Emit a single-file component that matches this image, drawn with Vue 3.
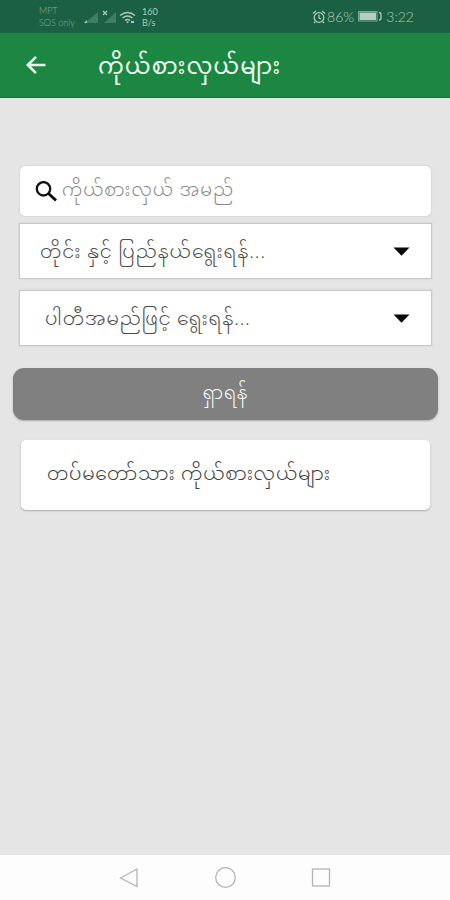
<script setup>
const title = 'ကိုယ်စားလှယ်များ'
const searchHint = 'ကိုယ်စားလှယ် အမည်'
const filters = [
  { key: 'region', label: 'တိုင်း နှင့် ပြည်နယ်ရွေးရန်...' },
  { key: 'party', label: 'ပါတီအမည်ဖြင့် ရွေးရန်...' },
]
const submitLabel = 'ရှာရန်'
const cardLabel = 'တပ်မတော်သား ကိုယ်စားလှယ်များ'
</script>

<template>
  <div class="screen">
    <div class="status">
      <div class="carrier"><span>MPT</span><span>SOS only</span></div>
      <svg class="signals" width="52" height="16" viewBox="0 0 52 16">
        <path d="M1 14L14 3V14Z" fill="#3f7d66" />
        <path d="M0 14l3-3v3z" fill="#a9cbbb" />
        <path d="M20 14L32 3V14Z" fill="#3f7d66" />
        <path d="M19 2l4 4M23 2l-4 4" stroke="#a9cbbb" stroke-width="1.2" />
        <g fill="none" stroke="#a9cbbb" stroke-width="1.5">
          <path d="M36 6.5Q43.500 .5 51 6.500M38.500 9Q43.500 5 48.500 9M41 11.500Q43.500 9.500 46 11.500" />
        </g>
        <path d="M42 12.500h3l-1.500 2zM47 12h3v2h-3z" fill="#a9cbbb" />
      </svg>
      <div class="rate"><span>160</span><span>B/s</span></div>
      <div class="right">
        <svg width="14" height="14" viewBox="0 0 14 14" fill="none" stroke="#a9cbbb" stroke-width="1.300">
          <circle cx="7" cy="7.500" r="4.800" />
          <path d="M7 4.500V8l2 1M1 3.500L4 1M13 3.500L10 1M3.500 11.500L2 13M10.500 11.500L12 13" />
        </svg>
        <span class="percent">86%</span>
        <svg class="battery" width="25" height="11" viewBox="0 0 25 11">
          <rect x=".5" y=".5" width="18.500" height="9.500" fill="none" stroke="#7caa97" />
          <rect x="1.500" y="1.500" width="16.500" height="7.500" fill="#b5d0c3" />
          <path d="M21 1.500q2 0 2 2v3.500q0 2-2 2" fill="none" stroke="#a9cbbb" stroke-width="1.300" />
        </svg>
        <span class="clock">3:22</span>
      </div>
    </div>
    <header class="bar">
      <svg class="back" width="22" height="20" viewBox="0 0 22 20" fill="none" stroke="#e6f7e8" stroke-width="2.600">
        <path d="M20.500 10H3M11 1.800L2.800 10L11 18.200" />
      </svg>
      <h1 class="title">{{ title }}</h1>
    </header>
    <main class="body">
      <div class="search">
        <svg width="23" height="21" viewBox="0 0 23 21" fill="none" stroke="#111">
          <circle cx="8.500" cy="7.800" r="6.700" stroke-width="2.300" />
          <path d="M13.500 12.500L21 19.500" stroke-width="3" />
        </svg>
        <span class="hint">{{ searchHint }}</span>
      </div>
      <div v-for="f in filters" :key="f.key" class="select" :class="f.key">
        <span class="value">{{ f.label }}</span>
        <svg width="17" height="9" viewBox="0 0 17 9"><path d="M.5 .5H16.500L8.500 8.700Z" fill="#080808" /></svg>
      </div>
      <button class="submit"><span>{{ submitLabel }}</span></button>
      <div class="card"><span>{{ cardLabel }}</span></div>
    </main>
    <nav class="nav">
      <svg width="212" height="24" viewBox="0 0 212 24" fill="none" stroke="#b4b4b4" stroke-width="1.300">
        <path d="M1.500 12L18 3V20.500Z" />
        <circle cx="106.500" cy="11.500" r="9.800" />
        <rect x="193.500" y="3" width="17" height="17" />
      </svg>
    </nav>
  </div>
</template>

<style>
body {
  margin: 0;
}
</style>

<style scoped>
.screen {
  display: flex;
  flex-direction: column;
  width: 450px;
  height: 900px;
  overflow: hidden;
  background: #e5e5e5;
  font-family: "Noto Sans Myanmar", "Padauk", "Myanmar Text", Roboto, "Noto Sans", sans-serif;
  font-weight: 300;
  white-space: nowrap;
}
.status {
  display: flex;
  align-items: center;
  box-sizing: border-box;
  height: 33px;
  padding: 0 36px 0 39px;
  background: #1b6043;
  color: #a9cbbb;
  font-family: Lato, sans-serif;
}
.carrier {
  display: flex;
  flex-direction: column;
  width: 45px;
  padding-top: 1px;
  font-size: 9px;
  line-height: 12px;
  color: #85b09d;
}
.rate {
  display: flex;
  flex-direction: column;
  margin-left: 6px;
  padding-top: 1px;
  font-size: 9px;
  font-weight: 400;
  line-height: 11px;
}
.right {
  display: flex;
  align-items: center;
  margin-left: auto;
}
.percent {
  margin-left: 1px;
  font-size: 14px;
}
.battery {
  margin-left: 4px;
}
.clock {
  margin-left: 3px;
  font-size: 14px;
}
.bar {
  display: flex;
  align-items: center;
  box-sizing: border-box;
  height: 65px;
  padding-left: 25px;
  border-bottom: 1px solid #127438;
  background: #1b8743;
}
.title {
  margin: 0 0 0 51px;
  padding-top: 8px;
  font-size: 23px;
  font-weight: 400;
  letter-spacing: .95px;
  line-height: 40px;
  color: #edf9ee;
}
.body {
  flex: 1;
  display: flex;
  flex-direction: column;
  padding: 68px 18px 0 19px;
}
.search {
  display: flex;
  align-items: center;
  box-sizing: border-box;
  height: 50px;
  margin: 0 1px 7px;
  padding-left: 15px;
  border-radius: 5px;
  background: #fff;
  box-shadow: 0 0 2px #bbb;
}
.hint {
  margin-left: 4px;
  font-size: 18px;
  letter-spacing: .95px;
  color: #888;
}
.select {
  display: flex;
  align-items: center;
  justify-content: space-between;
  box-sizing: border-box;
  height: 56px;
  margin-bottom: 11px;
  padding: 0 21px 0 20px;
  border: 1px solid #c9c9c9;
  background: #fff;
  box-shadow: 0 0 2px #ccc;
}
.party {
  padding-left: 25px;
}
.value {
  padding-top: 4px;
  font-size: 19px;
  letter-spacing: .9px;
  color: #4c4c4c;
}
.party .value {
  letter-spacing: .8px;
}
.submit {
  height: 52px;
  margin: 11px -6px 20px;
  padding: 0;
  border: 0;
  border-radius: 11px;
  background: #808080;
  box-shadow: 0 1px 2px #aaa;
  color: #fff;
  font: inherit;
  font-size: 18px;
  letter-spacing: .8px;
}
.card {
  display: flex;
  align-items: center;
  box-sizing: border-box;
  height: 70px;
  margin: 0 2px;
  padding-left: 26px;
  border-radius: 5px;
  background: #fff;
  box-shadow: 0 1px 2px #aaa;
  font-size: 19px;
  letter-spacing: .75px;
  color: #404040;
}
.nav {
  display: flex;
  align-items: center;
  box-sizing: border-box;
  height: 45px;
  padding-left: 119px;
  background: #fdfdfd;
}
</style>
